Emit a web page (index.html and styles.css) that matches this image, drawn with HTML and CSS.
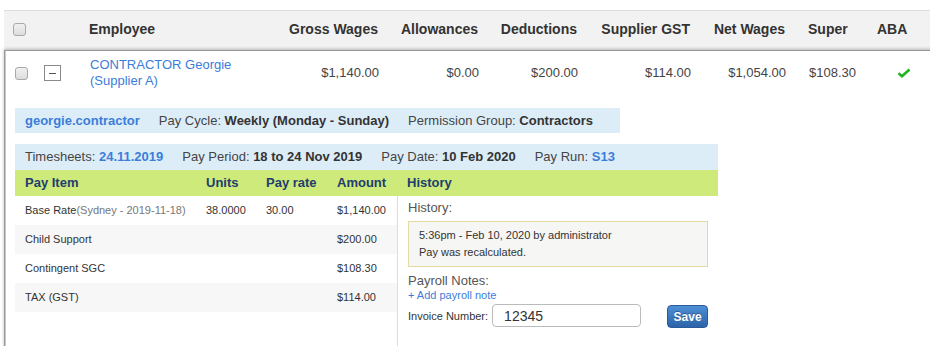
FILE: index.html
```html
<!DOCTYPE html>
<html lang="en">
<head>
    <meta charset="UTF-8">
    <title>Pay Run - Employees</title>
    <link rel="stylesheet" href="styles.css">
</head>
<body>
    <div class="payroll">
        <div class="pay-grid pay-head">
            <div class="cell cb-cell"><span class="checkbox"></span></div>
            <div class="cell"></div>
            <div class="cell emp">Employee</div>
            <div class="cell num">Gross Wages</div>
            <div class="cell num">Allowances</div>
            <div class="cell num">Deductions</div>
            <div class="cell num">Supplier GST</div>
            <div class="cell num">Net Wages</div>
            <div class="cell super">Super</div>
            <div class="cell aba">ABA</div>
        </div>

        <div class="pay-row">
            <div class="pay-grid pay-main">
                <div class="cell cb-cell"><span class="checkbox"></span></div>
                <div class="cell toggle-cell"><span class="toggle"></span></div>
                <div class="cell emp"><a class="link" href="#">CONTRACTOR Georgie<br>(Supplier A)</a></div>
                <div class="cell num">$1,140.00</div>
                <div class="cell num">$0.00</div>
                <div class="cell num">$200.00</div>
                <div class="cell num">$114.00</div>
                <div class="cell num">$1,054.00</div>
                <div class="cell super">$108.30</div>
                <div class="cell aba-check">
                    <svg width="14" height="10" viewBox="0 0 14 10"><path d="M1.5 5.2 L5 8.2 L12.5 1.5" fill="none" stroke="#1fb51f" stroke-width="2.6"/></svg>
                </div>
            </div>

            <div class="details">
                <div class="info-bar info-user">
                    <a class="link strong" href="#">georgie.contractor</a>
                    <span>Pay Cycle: <b>Weekly (Monday - Sunday)</b></span>
                    <span>Permission Group: <b>Contractors</b></span>
                </div>
                <div class="info-bar info-pay">
                    <span>Timesheets: <a class="link strong" href="#">24.11.2019</a></span>
                    <span>Pay Period: <b>18 to 24 Nov 2019</b></span>
                    <span>Pay Date: <b>10 Feb 2020</b></span>
                    <span>Pay Run: <a class="link strong" href="#">S13</a></span>
                </div>

                <div class="items-head">
                    <div>Pay Item</div>
                    <div>Units</div>
                    <div>Pay rate</div>
                    <div>Amount</div>
                    <div>History</div>
                </div>

                <div class="items-body">
                    <div class="items">
                        <div class="item">
                            <div>Base Rate<span class="muted">(Sydney - 2019-11-18)</span></div>
                            <div>38.0000</div>
                            <div>30.00</div>
                            <div>$1,140.00</div>
                        </div>
                        <div class="item">
                            <div>Child Support</div>
                            <div></div>
                            <div></div>
                            <div>$200.00</div>
                        </div>
                        <div class="item">
                            <div>Contingent SGC</div>
                            <div></div>
                            <div></div>
                            <div>$108.30</div>
                        </div>
                        <div class="item">
                            <div>TAX (GST)</div>
                            <div></div>
                            <div></div>
                            <div>$114.00</div>
                        </div>
                    </div>

                    <div class="history">
                        <div class="label">History:</div>
                        <div class="history-box">
                            <div>5:36pm - Feb 10, 2020 by administrator</div>
                            <div>Pay was recalculated.</div>
                        </div>
                        <div class="label notes-label">Payroll Notes:</div>
                        <a class="link small" href="#">+ Add payroll note</a>
                        <div class="invoice">
                            <label>Invoice Number:</label>
                            <input type="text" value="12345">
                            <button class="btn-save">Save</button>
                        </div>
                    </div>
                </div>
            </div>
        </div>
    </div>
</body>
</html>
```

FILE: styles.css
```css
html, body {
    margin: 0;
    overflow: hidden;
}
body {
    font-family: "Liberation Sans", Arial, sans-serif;
    color: #444;
    background: #fff;
    padding-top: 10px;
}
.payroll {
    width: 950px;
    margin-left: 4px;
}
.link {
    color: #3b7dd8;
    text-decoration: none;
}
.strong {
    font-weight: bold;
}
b {
    color: #333;
}

/* Main employee grid */
.pay-grid {
    display: grid;
    grid-template-columns: 36px 44px 196px 108px 100px 99px 113px 95px 65px 1fr;
    align-items: center;
}
.cell {
    white-space: nowrap;
}
.pay-head {
    border-top: 1px solid #ddd;
    background: #f2f2f2;
    font-size: 14px;
    font-weight: bold;
    color: #333;
    line-height: 17px;
    padding: 10px 0 12px;
}
.cell.num {
    text-align: right;
    padding-right: 10px;
}
.cell.emp {
    padding-left: 5px;
}
.cell.super {
    padding-left: 13px;
}
.cell.aba {
    padding-left: 17px;
}
.cb-cell {
    padding-left: 9px;
    height: 13px;
}
.checkbox {
    display: block;
    width: 11px;
    height: 11px;
    border: 1px solid #a9a9a9;
    border-radius: 3px;
    background: linear-gradient(#f1f1f1, #dcdcdc);
}

.pay-row {
    border: 1px solid #9a9a9a;
    border-right: 0;
    box-shadow: 0 -1px 3px rgba(0, 0, 0, 0.25), inset 1px 0 0 #c8c8c8;
}
.pay-main {
    font-size: 13px;
    line-height: 16px;
    padding: 6px 0;
}
.pay-main .cb-cell {
    padding-left: 10px;
}
.toggle-cell {
    padding-left: 3px;
    height: 16px;
}
.toggle {
    display: block;
    position: relative;
    width: 15px;
    height: 14px;
    border: 1px solid #8a8a8a;
    background: #fff;
}
.toggle::after {
    content: "";
    position: absolute;
    left: 4px;
    top: 7px;
    width: 7px;
    height: 1px;
    background: #555;
}
.aba-check {
    padding-left: 36px;
    height: 10px;
}
.aba-check svg {
    display: block;
}

/* Expanded details */
.details {
    padding: 13px 0 0 10px;
    display: flex;
    flex-direction: column;
    align-items: flex-start;
    font-size: 13px;
}
.info-bar {
    display: flex;
    gap: 19px;
    background: #ddedf8;
    line-height: 25px;
    padding: 0 27px 0 10px;
    white-space: nowrap;
}
.info-pay {
    margin-top: 11px;
    line-height: 26px;
    width: 666px;
}
.items-head {
    display: grid;
    grid-template-columns: 181px 60px 71px 70px 1fr;
    width: 703px;
    background: #cdea7a;
    color: #223d6e;
    font-weight: bold;
    line-height: 26px;
}
.items-head div {
    padding-left: 10px;
}
.items-body {
    display: flex;
    width: 703px;
}
.items {
    width: 382px;
    font-size: 11px;
    color: #333;
}
.item {
    display: grid;
    grid-template-columns: 181px 60px 71px 70px;
    line-height: 29px;
    white-space: nowrap;
}
.item div {
    padding-left: 10px;
}
.item:nth-child(even) {
    background: #f7f7f7;
}
.muted {
    color: #777;
}

.history {
    flex: 1;
    border-left: 1px solid #ddd;
    padding: 4px 10px 40px;
    display: flex;
    flex-direction: column;
    align-items: flex-start;
}
.label {
    font-size: 13px;
    line-height: 16px;
    color: #555;
}
.history-box {
    align-self: stretch;
    margin-top: 5px;
    background: #f6f6f4;
    border: 1px solid #e6d7a6;
    padding: 5px 10px;
    font-size: 11px;
    line-height: 17px;
    color: #333;
}
.notes-label {
    margin-top: 6px;
}
.small {
    font-size: 11px;
    line-height: 13px;
}
.invoice {
    display: flex;
    align-items: center;
    margin-top: 1px;
    white-space: nowrap;
}
.invoice label {
    font-size: 11px;
    color: #333;
}
.invoice input {
    width: 149px;
    height: 23px;
    box-sizing: border-box;
    margin-left: 4px;
    border: 1px solid #bbb;
    border-radius: 4px;
    padding: 0 11px;
    font-family: "Liberation Sans", Arial, sans-serif;
    font-size: 14px;
    color: #333;
}
.btn-save {
    margin-left: 26px;
    margin-top: 2px;
    width: 41px;
    height: 23px;
    padding: 0;
    border: 1px solid #2a5b98;
    border-radius: 4px;
    background: linear-gradient(#4d8fd6, #2b63a7);
    color: #fff;
    font-family: "Liberation Sans", Arial, sans-serif;
    font-size: 12px;
    font-weight: bold;
    text-shadow: 0 -1px 0 rgba(0, 0, 0, 0.3);
}
```
